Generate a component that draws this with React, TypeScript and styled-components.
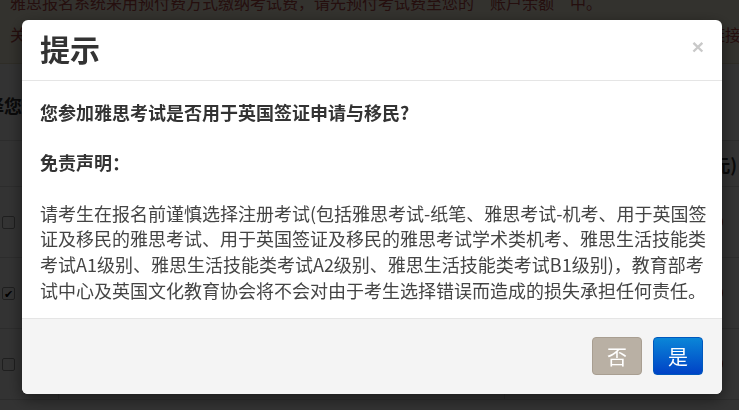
import type { FC } from 'react'
import styled, { createGlobalStyle, css } from 'styled-components'

const GlobalStyle = createGlobalStyle`
  html, body {
    margin: 0;
    padding: 0;
    background: #ffffff;
    overflow: hidden;
  }
  body {
    font-family: "Noto Sans CJK SC", "Noto Sans", sans-serif;
    color: #333333;
  }
`

// page behind the dialog
const Page = styled.div`
  width: 739px;
  height: 410px;
  overflow: hidden;
`

const Alert = styled.div`
  margin-top: -14px;
  padding: 0 0 13px 10px;
  background: #fcf8e3;
  border-bottom: 1px solid #e8dfc0;
  color: #b94a48;
  font-size: 16px;
  line-height: 32px;
  white-space: nowrap;
`

const AlertLine = styled.div`
  display: flex;
  justify-content: space-between;
  margin-right: -2px;
`

const Heading = styled.h3`
  margin: 0;
  height: 76px;
  display: flex;
  align-items: center;
  padding-top: 6px;
  box-sizing: border-box;
  text-indent: -50px;
  font-size: 18px;
  font-weight: bold;
  color: #333333;
  white-space: nowrap;
`

const Table = styled.div`
  border-top: 1px solid #dddddd;
`

const Row = styled.div<{ $head?: boolean }>`
  display: grid;
  grid-template-columns: 59px 446px 1fr;
  height: ${(p) => (p.$head ? 45 : 70)}px;
  border-bottom: 1px solid #dddddd;
  ${(p) =>
    p.$head &&
    css`
      font-weight: bold;
      font-size: 18px;
    `}
`

const Cell = styled.div<{ $align?: 'left' | 'right' }>`
  display: flex;
  align-items: center;
  justify-content: ${(p) => (p.$align === 'right' ? 'flex-end' : 'flex-start')};
  border-right: 1px solid #dddddd;
  white-space: nowrap;
  overflow: hidden;
  &:last-child {
    border-right: none;
    padding-right: 2px;
  }
`

const Check = styled.span<{ $checked?: boolean }>`
  margin-left: 2px;
  width: 11px;
  height: 11px;
  border: 1px solid #999999;
  border-radius: 2px;
  background: #ffffff;
  display: flex;
  align-items: center;
  justify-content: center;
  font-size: 11px;
  line-height: 1;
  color: #000000;
`

const Dot = styled.span`
  margin-right: 14px;
  width: 18px;
  height: 18px;
  border-radius: 50%;
  border: 2px solid #c0392b;
  box-sizing: border-box;
`

// modal
const Backdrop = styled.div`
  position: fixed;
  inset: 0;
  background: rgba(0, 0, 0, 0.8);
`

const Dialog = styled.div`
  position: fixed;
  top: 20px;
  left: 22px;
  width: 700px;
  background: #ffffff;
  border-radius: 6px;
  box-shadow: 0 5px 15px rgba(0, 0, 0, 0.5);
  overflow: hidden;
`

const Header = styled.div`
  height: 60px;
  padding: 0 18px;
  display: flex;
  align-items: center;
  justify-content: space-between;
  border-bottom: 1px solid #e5e5e5;
`

const Title = styled.h4`
  margin: -5px 0 0;
  font-size: 30px;
  font-weight: bold;
  line-height: 1;
  color: #333333;
`

const Close = styled.button`
  border: none;
  background: none;
  padding: 0;
  margin-top: -8px;
  font-family: "Liberation Sans", sans-serif;
  font-size: 21px;
  font-weight: bold;
  line-height: 1;
  color: #c9c9c9;
  cursor: pointer;
`

const Body = styled.div`
  padding: 19px 16px 15px 18px;
  font-size: 18px;
  line-height: 25.6px;
`

const Strong = styled.p<{ $gap: number }>`
  margin: 0 0 ${(p) => p.$gap}px;
  font-weight: bold;
  color: #333333;
`

const Text = styled.p`
  margin: 0;
  color: #444444;
`

const TextLine = styled.span`
  display: block;
  white-space: nowrap;
`

const Footer = styled.div`
  padding: 18px 19px 19px;
  display: flex;
  justify-content: flex-end;
  gap: 11px;
  background: #f4f4f4;
  border-top: 1px solid #e5e5e5;
`

const Button = styled.button<{ $primary?: boolean }>`
  width: 50px;
  height: 38px;
  padding: 0;
  border-radius: 4px;
  font-family: "Noto Sans CJK SC", sans-serif;
  font-size: 20px;
  color: #ffffff;
  cursor: pointer;
  border: 1px solid ${(p) => (p.$primary ? '#0058bd' : '#a89e91')};
  background: ${(p) =>
    p.$primary ? 'linear-gradient(#0a86d8, #0042c6)' : '#b9b0a4'};
`

const rows = [false, true, false]

const disclaimer = [
  '请考生在报名前谨慎选择注册考试(包括雅思考试-纸笔、雅思考试-机考、用于英国签',
  '证及移民的雅思考试、用于英国签证及移民的雅思考试学术类机考、雅思生活技能类',
  '考试A1级别、雅思生活技能类考试A2级别、雅思生活技能类考试B1级别)，教育部考',
  '试中心及英国文化教育协会将不会对由于考生选择错误而造成的损失承担任何责任。',
]

const App: FC = () => {
  return (
    <>
      <GlobalStyle />
      <Page>
        <Alert>
          <div>雅思报名系统采用预付费方式缴纳考试费，请先预付考试费至您的“账户余额”中。</div>
          <AlertLine>
            <span>关于预付考试费的详细说明，请查看帮助中心。</span>
            <span>请点击链接</span>
          </AlertLine>
        </Alert>
        <Heading>请选择您要报名的考试</Heading>
        <Table>
          <Row $head>
            <Cell />
            <Cell>考试名称</Cell>
            <Cell $align="right">考试费(元)</Cell>
          </Row>
          {rows.map((checked, i) => (
            <Row key={i}>
              <Cell>
                <Check $checked={checked}>{checked ? '✔' : ''}</Check>
              </Cell>
              <Cell>雅思考试</Cell>
              <Cell $align="right">
                <Dot />
              </Cell>
            </Row>
          ))}
        </Table>
      </Page>

      <Backdrop />
      <Dialog>
        <Header>
          <Title>提示</Title>
          <Close>×</Close>
        </Header>
        <Body>
          <Strong $gap={24}>您参加雅思考试是否用于英国签证申请与移民?</Strong>
          <Strong $gap={25.6}>免责声明：</Strong>
          <Text>
            {disclaimer.map((line) => (
              <TextLine key={line}>{line}</TextLine>
            ))}
          </Text>
        </Body>
        <Footer>
          <Button>否</Button>
          <Button $primary>是</Button>
        </Footer>
      </Dialog>
    </>
  )
}

export default App
